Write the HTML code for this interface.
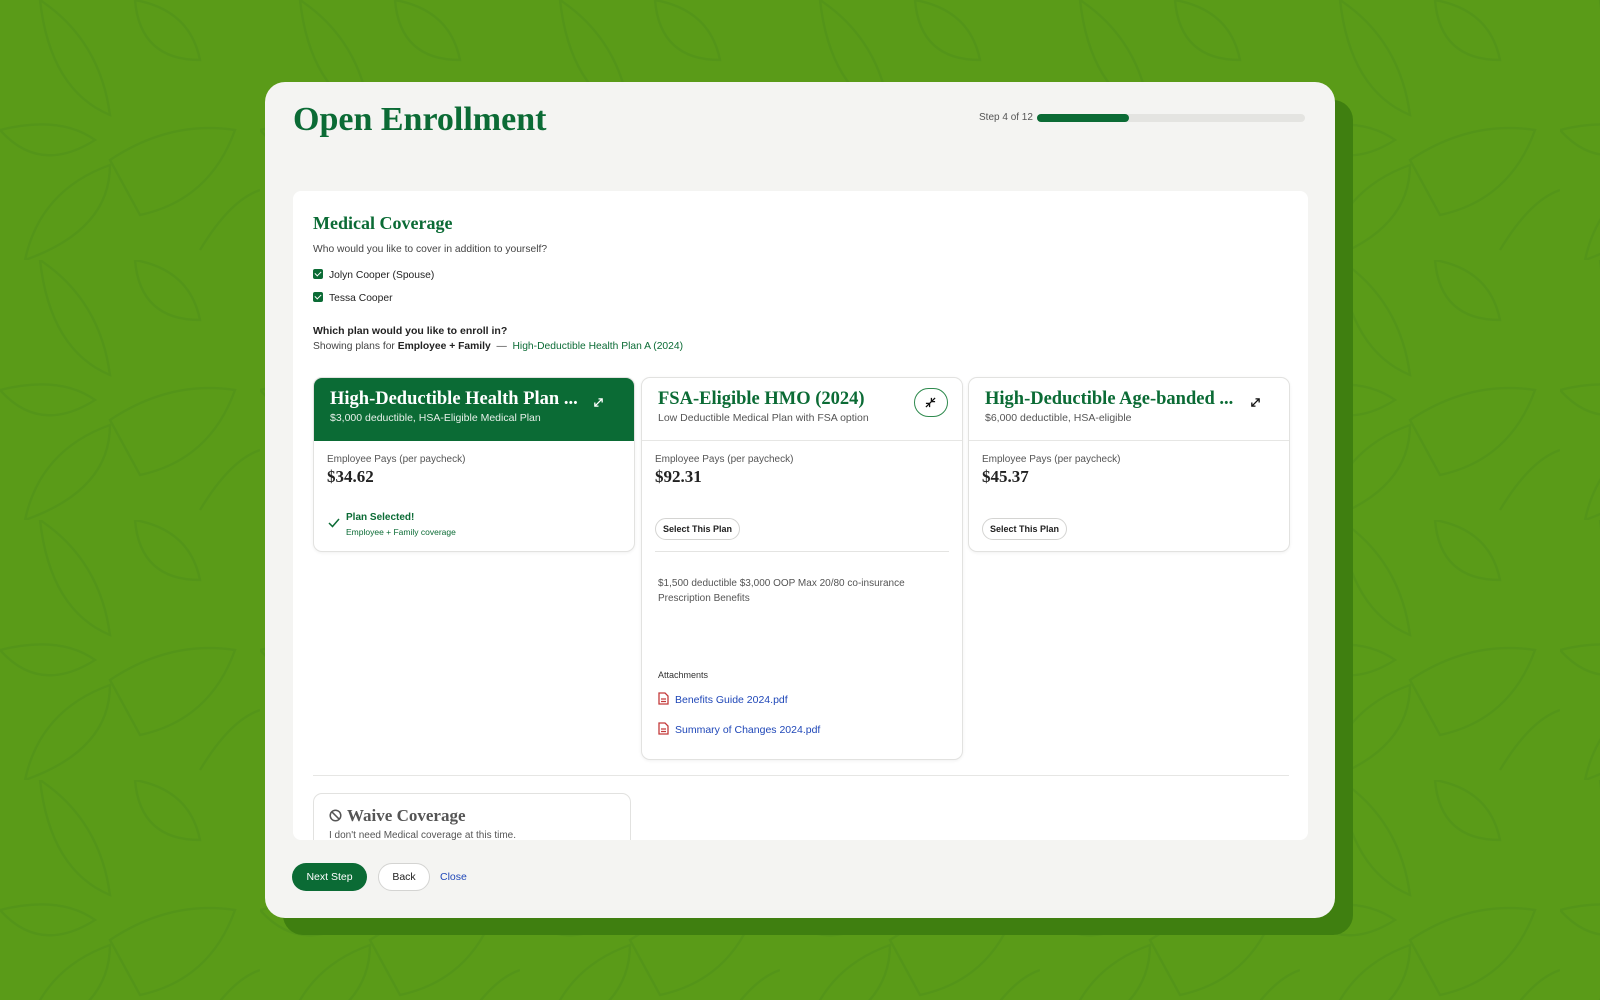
<!DOCTYPE html>
<html><head><meta charset="utf-8"><style>
*{box-sizing:border-box;margin:0;padding:0}
body{width:1600px;height:1000px;overflow:hidden;background:#5a9b18;font-family:"Liberation Sans",sans-serif;position:relative;color:#333}
.abs{position:absolute}
.serif{font-family:"Liberation Serif",serif;font-weight:bold}
.g{color:#0b6b35}
.shadow{left:283px;top:100px;width:1070px;height:835px;background:#3f7f10;border-radius:20px}
.win{left:265px;top:82px;width:1070px;height:836px;background:#f4f4f2;border-radius:20px;overflow:hidden}
.panel{left:28px;top:109px;width:1015px;height:649px;background:#fff;border-radius:8px;overflow:hidden}
.card{position:absolute;top:186px;width:322px;background:#fff;border:1px solid #e2e2e0;border-radius:9px;overflow:hidden;box-shadow:0 1px 3px rgba(0,0,0,.06)}
.hd{height:63px;border-bottom:1px solid #e6e6e4;padding:11px 16px;position:relative}
.hd .t{font-size:18.5px;white-space:nowrap;font-family:"Liberation Serif",serif;font-weight:bold;color:#0b6b35}
.hd .s{font-size:10.5px;color:#555;margin-top:2px}
.lbl{font-size:10px;color:#555}
.price{font-family:"Liberation Serif",serif;font-weight:bold;font-size:17px;color:#222;margin-top:2px}
.btn{display:inline-block;border:1px solid #d4d4d2;border-radius:12px;font-size:9px;font-weight:bold;padding:5px 7px;color:#222;background:#fff}
.cb{display:inline-block;width:10px;height:10px;background:#0b6b35;border-radius:2px;vertical-align:-1px;margin-right:6px;position:relative}
.cb:after{content:"";position:absolute;left:3px;top:1px;width:3px;height:5px;border:solid #fff;border-width:0 1.3px 1.3px 0;transform:rotate(45deg)}
.lnk{font-size:10.5px;color:#1f47b8}
.t10{font-size:10.3px}
</style></head><body>
<svg class="abs" style="left:0;top:0" width="1600" height="1000">
<defs><pattern id="p" width="260" height="260" patternUnits="userSpaceOnUse">
<g fill="none" stroke="#549519" stroke-width="2.5">
<path d="M40 0 Q100 40 110 115 Q50 90 40 0Z"/>
<path d="M135 0 Q190 10 200 60 Q140 60 135 0Z"/>
<path d="M0 130 Q60 115 95 140 Q40 175 0 130Z"/>
<path d="M110 160 Q170 120 235 130 Q210 200 140 215Z"/>
<path d="M25 260 Q40 190 110 165 Q110 230 25 260Z"/>
<path d="M200 250 Q230 200 260 190"/>
</g></pattern></defs>
<rect width="1600" height="1000" fill="url(#p)"/>
</svg>
<div class="abs shadow"></div>
<div class="abs win">
  <div class="abs serif g" style="left:28px;top:19px;font-size:34px">Open Enrollment</div>
  <div class="abs" style="left:714px;top:30px;font-size:10px;color:#555">Step 4 of 12</div>
  <div class="abs" style="left:772px;top:32px;width:268px;height:8px;background:#e4e4e1;border-radius:4px"></div>
  <div class="abs" style="left:772px;top:32px;width:92px;height:8px;background:#0b6b35;border-radius:4px"></div>

  <div class="abs panel">
    <div class="abs serif g" style="left:20px;top:22px;font-size:18px">Medical Coverage</div>
    <div class="abs t10" style="left:20px;top:53px;color:#444">Who would you like to cover in addition to yourself?</div>
    <div class="abs t10" style="left:20px;top:78px;color:#222"><span class="cb"></span>Jolyn Cooper (Spouse)</div>
    <div class="abs t10" style="left:20px;top:101px;color:#222"><span class="cb"></span>Tessa Cooper</div>
    <div class="abs" style="left:20px;top:134px;font-size:10.5px;font-weight:bold;color:#222">Which plan would you like to enroll in?</div>
    <div class="abs t10" style="left:20px;top:150px;color:#444">Showing plans for <b style="color:#222">Employee + Family</b> &nbsp;— &nbsp;<span class="g">High-Deductible Health Plan A (2024)</span></div>

    <div class="card" style="left:20px;height:175px">
      <div class="hd" style="background:#0b6b35;border-color:#0b6b35">
        <div class="t" style="color:#fff">High-Deductible Health Plan ...</div>
        <div class="s" style="color:#e8f1ea">$3,000 deductible, HSA-Eligible Medical Plan</div>
        <svg class="abs" style="left:279px;top:19px" width="11" height="11" viewBox="0 0 12 12" stroke="#fff" stroke-width="1.4" fill="none"><path d="M2 10L10 2M6 2h4v4M2 6v4h4"/></svg>
      </div>
      <div style="padding:13px 13px">
        <div class="lbl">Employee Pays (per paycheck)</div>
        <div class="price">$34.62</div>
        <svg class="abs" style="left:14px;top:140px" width="12" height="10" viewBox="0 0 12 10" fill="none" stroke="#0b6b35" stroke-width="1.5"><path d="M1 5l3.5 3.5L11 1"/></svg>
        <div class="abs" style="left:32px;top:134px;font-size:10px;font-weight:bold;color:#0b6b35">Plan Selected!</div>
        <div class="abs" style="left:32px;top:149px;font-size:8.5px;color:#0b6b35">Employee + Family coverage</div>
      </div>
    </div>

    <div class="card" style="left:348px;height:383px">
      <div class="hd">
        <div class="t">FSA-Eligible HMO (2024)</div>
        <div class="s">Low Deductible Medical Plan with FSA option</div>
        <div class="abs" style="left:272px;top:10px;width:34px;height:29px;border:1.5px solid #2f8a4e;border-radius:15px"></div>
        <svg class="abs" style="left:283px;top:19px" width="11" height="11" viewBox="0 0 12 12" stroke="#111" stroke-width="1.4" fill="none"><path d="M1 11L11 1M7 1v4h4M1 7h4v4"/></svg>
      </div>
      <div style="padding:13px 13px">
        <div class="lbl">Employee Pays (per paycheck)</div>
        <div class="price">$92.31</div>
        <div class="btn" style="margin-top:31px">Select This Plan</div>
        <div style="border-top:1px solid #e4e4e2;margin-top:11px"></div>
        <div style="font-size:10px;color:#555;margin-top:24px;padding-left:3px;line-height:15px">$1,500 deductible $3,000 OOP Max 20/80 co-insurance<br>Prescription Benefits</div>
        <div style="font-size:9px;color:#333;margin-top:64px;padding-left:3px">Attachments</div>
        <div style="margin-top:10px;padding-left:3px"><svg width="11" height="13" viewBox="0 0 11 13" fill="none" stroke="#c43a3a" stroke-width="1.3" style="vertical-align:-2px;margin-right:6px"><path d="M1 1h6l3 3v8H1z M3 7h5M3 9.5h5"/></svg><span class="lnk">Benefits Guide 2024.pdf</span></div>
        <div style="margin-top:12px;padding-left:3px"><svg width="11" height="13" viewBox="0 0 11 13" fill="none" stroke="#c43a3a" stroke-width="1.3" style="vertical-align:-2px;margin-right:6px"><path d="M1 1h6l3 3v8H1z M3 7h5M3 9.5h5"/></svg><span class="lnk">Summary of Changes 2024.pdf</span></div>
      </div>
    </div>

    <div class="card" style="left:675px;height:175px">
      <div class="hd">
        <div class="t">High-Deductible Age-banded ...</div>
        <div class="s">$6,000 deductible, HSA-eligible</div>
        <svg class="abs" style="left:281px;top:19px" width="11" height="11" viewBox="0 0 12 12" stroke="#111" stroke-width="1.4" fill="none"><path d="M2 10L10 2M6 2h4v4M2 6v4h4"/></svg>
      </div>
      <div style="padding:13px 13px">
        <div class="lbl">Employee Pays (per paycheck)</div>
        <div class="price">$45.37</div>
        <div class="btn" style="margin-top:31px">Select This Plan</div>
      </div>
    </div>

    <div class="abs" style="left:20px;top:584px;width:976px;border-top:1px solid #e6e6e4"></div>
    <div class="abs" style="left:20px;top:602px;width:318px;height:80px;border:1px solid #e2e2e0;border-radius:9px;padding:12px 15px">
      <div style="font-family:'Liberation Serif',serif;font-weight:bold;font-size:17px;color:#555"><svg width="13" height="13" viewBox="0 0 13 13" fill="none" stroke="#555" stroke-width="1.5" style="vertical-align:-1px;margin-right:5px"><circle cx="6.5" cy="6.5" r="5.3"/><path d="M2.8 2.8l7.4 7.4"/></svg>Waive Coverage</div>
      <div style="font-size:10px;color:#555;margin-top:4px">I don't need Medical coverage at this time.</div>
    </div>
  </div>

  <div class="abs" style="left:27px;top:781px;width:75px;height:28px;background:#0b6b35;border-radius:14px;color:#fff;font-size:10.5px;text-align:center;line-height:28px">Next Step</div>
  <div class="abs" style="left:113px;top:781px;width:52px;height:28px;background:#fff;border:1px solid #d4d4d2;border-radius:14px;color:#222;font-size:10.5px;text-align:center;line-height:26px">Back</div>
  <div class="abs" style="left:175px;top:789px;font-size:10.5px;color:#1f47b8">Close</div>
</div>
</body></html>
